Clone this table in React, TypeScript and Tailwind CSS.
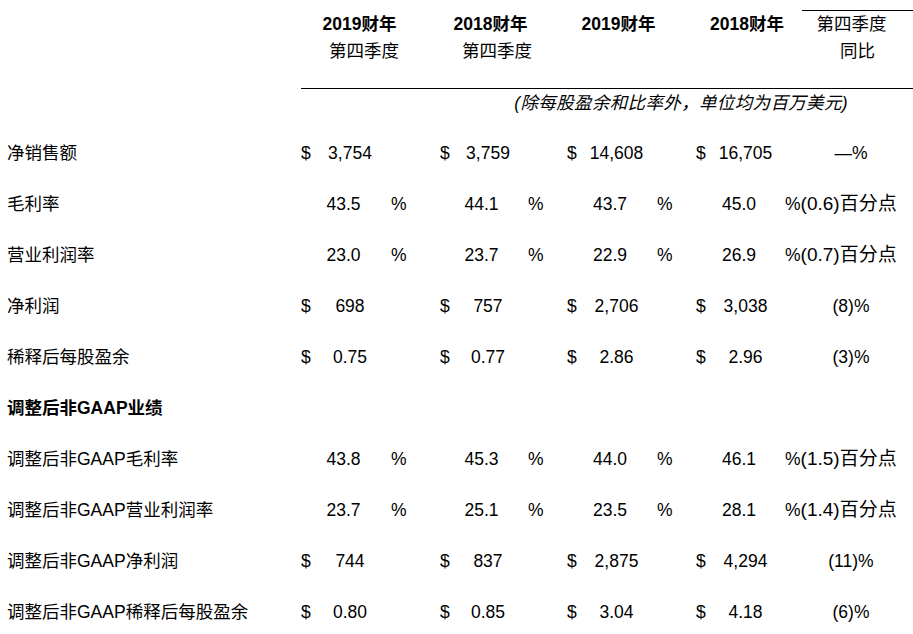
import React from "react";

type Row = {
  label: string;
  kind: "$" | "%" | "section";
  values?: string[];
  change?: string;
};

const rows: Row[] = [
  { label: "净销售额", kind: "$", values: ["3,754", "3,759", "14,608", "16,705"], change: "—%" },
  { label: "毛利率", kind: "%", values: ["43.5", "44.1", "43.7", "45.0"], change: "(0.6)百分点" },
  { label: "营业利润率", kind: "%", values: ["23.0", "23.7", "22.9", "26.9"], change: "(0.7)百分点" },
  { label: "净利润", kind: "$", values: ["698", "757", "2,706", "3,038"], change: "(8)%" },
  { label: "稀释后每股盈余", kind: "$", values: ["0.75", "0.77", "2.86", "2.96"], change: "(3)%" },
  { label: "调整后非GAAP业绩", kind: "section" },
  { label: "调整后非GAAP毛利率", kind: "%", values: ["43.8", "45.3", "44.0", "46.1"], change: "(1.5)百分点" },
  { label: "调整后非GAAP营业利润率", kind: "%", values: ["23.7", "25.1", "23.5", "28.1"], change: "(1.4)百分点" },
  { label: "调整后非GAAP净利润", kind: "$", values: ["744", "837", "2,875", "4,294"], change: "(11)%" },
  { label: "调整后非GAAP稀释后每股盈余", kind: "$", values: ["0.80", "0.85", "3.04", "4.18"], change: "(6)%" },
];

const gridCols =
  "grid grid-cols-[301px_19px_60px_60px_20px_56px_51px_20px_59px_50px_20px_59px_138px] items-center h-[51px]";

function DataRow({ row }: { row: Row }) {
  if (row.kind === "section") {
    return (
      <div className="flex h-[51px] items-center pl-[7px] font-bold">{row.label}</div>
    );
  }
  const v = row.values!;
  const isPct = row.kind === "%";
  const dollar = isPct ? "" : "$";
  const valCls = isPct ? "text-center pr-[13px]" : "text-center";
  return (
    <div className={gridCols}>
      <div className="pl-[7px] whitespace-nowrap">{row.label}</div>
      <div>{dollar}</div>
      <div className={valCls}>{v[0]}</div>
      <div className="pl-[11px]">{isPct ? "%" : ""}</div>
      <div>{dollar}</div>
      <div className={valCls}>{v[1]}</div>
      <div className="pl-[12px]">{isPct ? "%" : ""}</div>
      <div>{dollar}</div>
      <div className={valCls}>{v[2]}</div>
      <div className="pl-[11px]">{isPct ? "%" : ""}</div>
      <div>{dollar}</div>
      <div className={valCls}>{v[3]}</div>
      {isPct ? (
        <div className="pl-[10px] whitespace-nowrap">
          %<span className="text-[19px]">{row.change}</span>
        </div>
      ) : (
        <div className="pl-[14px] text-center whitespace-nowrap">{row.change}</div>
      )}
    </div>
  );
}

export default function App() {
  return (
    <div className="h-[634px] w-[913px] overflow-hidden bg-white font-['Liberation_Sans','Noto_Sans_CJK_SC',sans-serif] text-[17.5px] text-black">
      {/* column headers */}
      <div className="flex pt-[10px] leading-[27px]">
        <div className="w-[301px]" />
        <div className="w-[117px] border-t border-transparent text-center">
          <div className="font-bold">2019财年</div>
          <div className="pl-[9px]">第四季度</div>
        </div>
        <div className="w-[145px] border-t border-transparent text-center">
          <div className="font-bold">2018财年</div>
          <div className="pl-[13px]">第四季度</div>
        </div>
        <div className="w-[111px] border-t border-transparent text-center">
          <div className="font-bold">2019财年</div>
        </div>
        <div className="w-[128px] border-t border-transparent pl-[18px] text-center">
          <div className="font-bold">2018财年</div>
        </div>
        <div className="w-[111px] border-t border-black text-center">
          <div className="pr-[12px]">第四季度</div>
          <div>同比</div>
        </div>
      </div>
      <div className="mt-[23px] ml-[301px] h-px bg-black" />
      <div className="mt-[4px] pr-[65px] text-right italic leading-[20px] tracking-[0.35px]">
        (除每股盈余和比率外，单位均为百万美元)
      </div>

      <div className="mt-[15px]">
        {rows.map((r) => (
          <DataRow key={r.label} row={r} />
        ))}
      </div>
    </div>
  );
}
